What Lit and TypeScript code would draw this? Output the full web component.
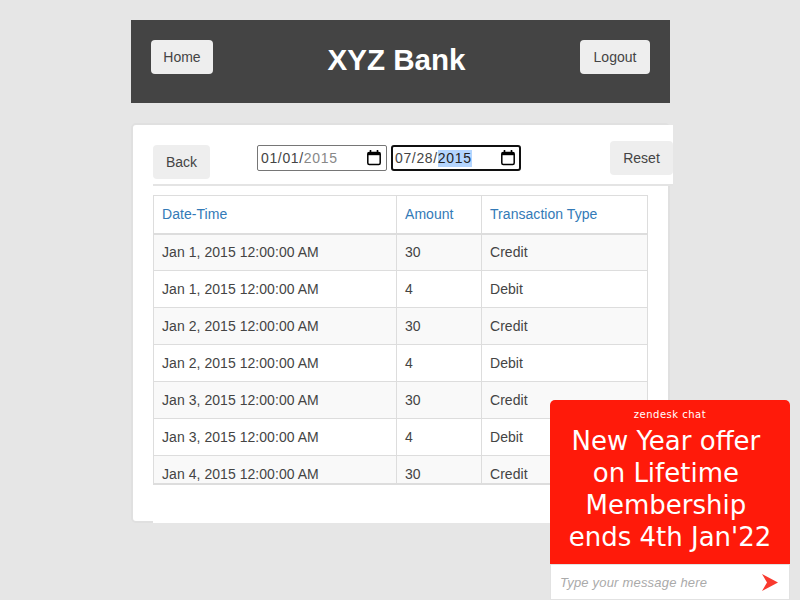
import { LitElement, html, css } from "lit";
import { customElement } from "lit/decorators.js";

const ROWS = [
  ["Jan 1, 2015 12:00:00 AM", "30", "Credit"],
  ["Jan 1, 2015 12:00:00 AM", "4", "Debit"],
  ["Jan 2, 2015 12:00:00 AM", "30", "Credit"],
  ["Jan 2, 2015 12:00:00 AM", "4", "Debit"],
  ["Jan 3, 2015 12:00:00 AM", "30", "Credit"],
  ["Jan 3, 2015 12:00:00 AM", "4", "Debit"],
  ["Jan 4, 2015 12:00:00 AM", "30", "Credit"],
];

const calendar = html`<svg class="cal" width="16" height="16" viewBox="0 0 16 16">
  <path d="M4.5 0v3M11.5 0v3" stroke="#000" stroke-width="1.6" fill="none"></path>
  <rect x="1.8" y="2.6" width="12.4" height="12" rx="1.5" fill="none" stroke="#000" stroke-width="1.5"></rect>
  <rect x="1.8" y="2.6" width="12.4" height="2.6" fill="#000"></rect>
</svg>`;

@customElement("app-root")
export class AppRoot extends LitElement {
  static styles = css`
    :host {
      display: block;
      height: 600px;
      overflow: hidden;
      position: relative;
      background: #e6e6e6;
      font-family: "Liberation Sans", Arial, sans-serif;
      font-size: 14px;
      color: #444;
    }
    .page {
      width: 539px;
      margin-left: 131px;
      padding-top: 20px;
    }
    .header {
      height: 83px;
      background: #444;
      display: flex;
      align-items: flex-start;
      justify-content: space-between;
      padding: 20px 20px 0;
      box-sizing: border-box;
    }
    .header h1 {
      margin: 3px 0 0;
      color: #fff;
      font-size: 29.6px;
      font-weight: 700;
      line-height: 34px;
    }
    .btn {
      display: flex;
      align-items: center;
      justify-content: center;
      height: 34px;
      box-sizing: border-box;
      background: #eee;
      border-radius: 4px;
      font-size: 14px;
    }
    .home { width: 62px; }
    .logout { width: 70px; }
    .card {
      margin-top: 20px;
      width: 539px;
      height: 400px;
      box-sizing: border-box;
      background: #fff;
      border: 2px solid #e0e0e0;
      border-radius: 5px;
      padding-left: 20px;
    }
    .content {
      width: 515px;
      height: 398px;
      background: #fff;
    }
    .toolbar {
      width: 520px;
      height: 61px;
      box-sizing: border-box;
      background: #fff;
      border-bottom: 2px solid #e4e4e4;
      display: flex;
      align-items: flex-start;
    }
    .back { width: 57px; margin-top: 20px; }
    .reset { width: 63px; margin-top: 16px; margin-left: auto; }
    .dates {
      display: flex;
      gap: 4px;
      margin-left: 47px;
      margin-top: 20px;
    }
    .date {
      width: 130px;
      height: 26px;
      box-sizing: border-box;
      border: 1px solid #767676;
      border-radius: 2px;
      display: flex;
      align-items: center;
      padding: 0 3px;
      background: #fff;
      letter-spacing: 0.65px;
    }
    .date.focus {
      border: 2px solid #101010;
      border-radius: 3px;
      padding: 0 2px;
    }
    .dim { color: #888; }
    .sel { background: #b4d5fe; color: #222; height: 17px; line-height: 17px; }
    .cal { margin-left: auto; margin-right: 1px; }
    .scroll {
      margin-top: 9px;
      width: 495px;
      height: 290px;
      overflow: hidden;
      box-sizing: border-box;
      border-bottom: 2px solid #ddd;
    }
    table {
      width: 495px;
      border-collapse: collapse;
      table-layout: fixed;
      letter-spacing: 0.05px;
    }
    th, td {
      border: 1px solid #ddd;
      padding: 0 8px;
      height: 37px;
      box-sizing: border-box;
      text-align: left;
      font-weight: 400;
    }
    th {
      color: #337ab7;
      height: 38px;
      border-bottom-width: 2px;
    }
    tr:nth-child(odd) td { background: #f9f9f9; }
    .chat {
      position: absolute;
      left: 550px;
      top: 400px;
      width: 240px;
      height: 200px;
      border-radius: 5px 5px 0 0;
      overflow: hidden;
      display: flex;
      flex-direction: column;
      background: #fff;
    }
    .promo {
      height: 164px;
      background: #ff1a0a;
      color: #fff;
      text-align: center;
      box-sizing: border-box;
      padding-top: 9px;
    }
    .brand {
      font-family: "DejaVu Sans", sans-serif;
      font-size: 10px;
      line-height: 11px;
      letter-spacing: 0.5px;
    }
    .offer {
      font-family: "DejaVu Sans", sans-serif;
      font-size: 26px;
      line-height: 32px;
      margin-top: 5px;
    }
    .input {
      flex: 1;
      display: flex;
      align-items: center;
      justify-content: space-between;
      padding: 0 11px 0 9px;
      border: 1px solid #e2e2e2;
      color: #aaa;
      font-size: 13px;
      font-style: italic;
      letter-spacing: 0.2px;
    }
  `;

  render() {
    return html`
      <div class="page">
        <div class="header">
          <div class="btn home">Home</div>
          <h1>XYZ Bank</h1>
          <div class="btn logout">Logout</div>
        </div>
        <div class="card">
          <div class="content">
            <div class="toolbar">
              <div class="btn back">Back</div>
              <div class="dates">
                <div class="date"><span>01/01/</span><span class="dim">2015</span>${calendar}</div>
                <div class="date focus"><span>07/28/</span><span class="sel">2015</span>${calendar}</div>
              </div>
              <div class="btn reset">Reset</div>
            </div>
            <div class="scroll">
              <table>
                <colgroup><col style="width:243px" /><col style="width:85px" /><col /></colgroup>
                <thead><tr><th>Date-Time</th><th>Amount</th><th>Transaction Type</th></tr></thead>
                <tbody>
                  ${ROWS.map((r) => html`<tr><td>${r[0]}</td><td>${r[1]}</td><td>${r[2]}</td></tr>`)}
                </tbody>
              </table>
            </div>
          </div>
        </div>
      </div>
      <div class="chat">
        <div class="promo">
          <div class="brand">zendesk chat</div>
          <div class="offer">New Year offer&nbsp;<br />on Lifetime&nbsp;<br />Membership&nbsp;<br />ends 4th Jan'22</div>
        </div>
        <div class="input">
          <span>Type your message here</span>
          <svg width="16" height="17" viewBox="0 0 16 17"><path d="M0 0 L16 8.5 L0 17 L5 8.5 Z" fill="#f9392e"></path></svg>
        </div>
      </div>
    `;
  }
}
